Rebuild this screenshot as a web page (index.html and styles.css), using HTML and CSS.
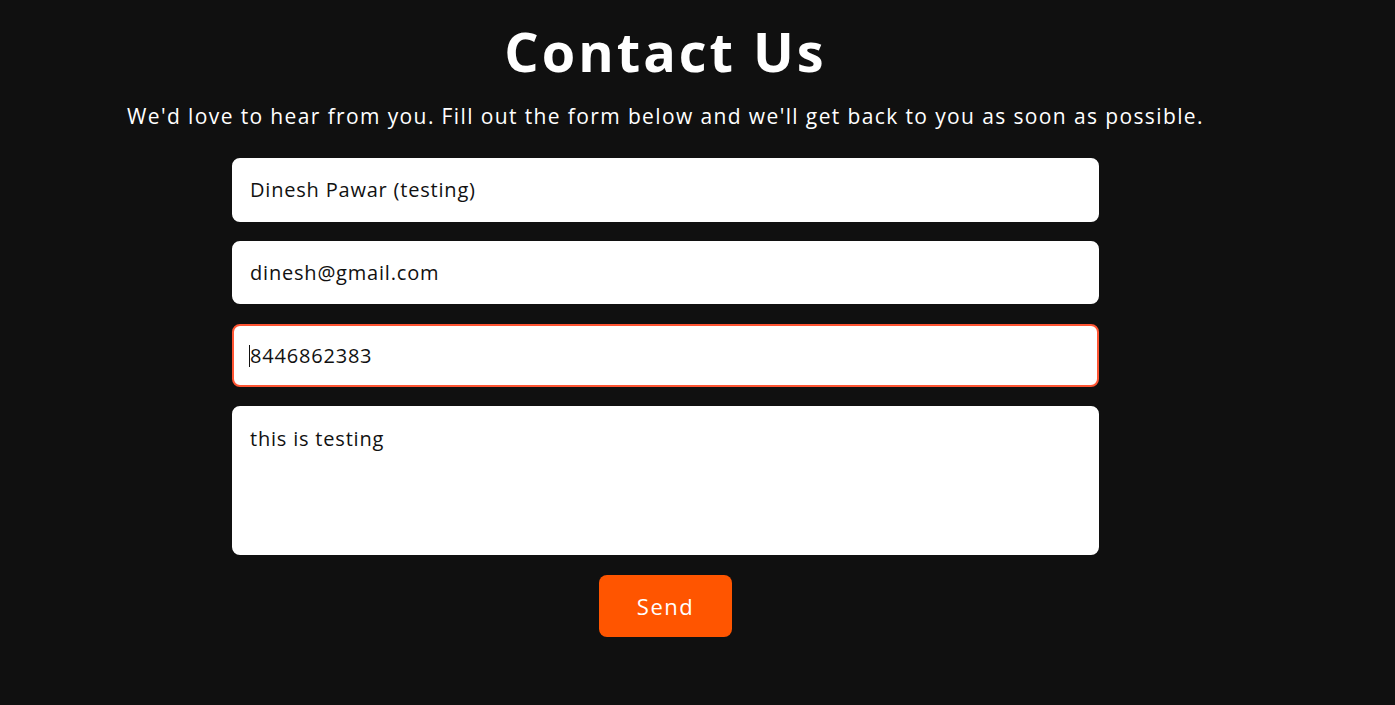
FILE: index.html
```html
<!DOCTYPE html>
<html lang="en">
<head>
<meta charset="utf-8">
<title>Contact Us</title>
<link rel="stylesheet" href="styles.css">
</head>
<body>
<main class="page">
  <h1 class="title">Contact Us</h1>
  <p class="lead">We'd love to hear from you. Fill out the form below and we'll get back to you as soon as possible.</p>
  <form class="form">
    <input class="field" type="text" value="Dinesh Pawar (testing)">
    <input class="field" type="email" value="dinesh@gmail.com">
    <div class="field-wrap">
      <input class="field field-focus" type="tel" value="8446862383">
      <span class="caret"></span>
    </div>
    <textarea class="field field-area">this is testing</textarea>
    <button class="send" type="button">Send</button>
  </form>
</main>
</body>
</html>
```
FILE: styles.css
```css
* { box-sizing: border-box; }
html, body { margin: 0; padding: 0; }
body {
  background: #101010;
  font-family: "Open Sans", "DejaVu Sans", sans-serif;
  color: #fff;
  height: 705px;
  overflow: hidden;
}
.page {
  width: 1331px;
  display: flex;
  flex-direction: column;
  align-items: center;
  padding-top: 18px;
}
.title {
  margin: 0;
  font-size: 54px;
  line-height: 66px;
  font-weight: 700;
  letter-spacing: 3px;
}
.lead {
  margin: 18px 0 0;
  font-size: 21px;
  line-height: 28px;
  font-weight: 400;
  letter-spacing: 1.38px;
}
.form {
  margin-top: 28px;
  width: 867px;
  display: flex;
  flex-direction: column;
  align-items: center;
  gap: 19.3px;
}
.field-wrap { position: relative; width: 100%; }
.field {
  display: block;
  width: 100%;
  height: 63.5px;
  border: 2px solid #fff;
  border-radius: 8px;
  background: #fff;
  padding: 0 16px;
  font-family: inherit;
  font-size: 20px;
  letter-spacing: 0.8px;
  color: #111;
  outline: none;
}
.field-focus { border-color: #ff5533; }
.caret {
  position: absolute;
  left: 17px;
  top: 21px;
  width: 1px;
  height: 22px;
  background: #111;
}
.field-area {
  height: 149px;
  padding: 18px 16px;
  resize: none;
  line-height: 26px;
}
.send {
  margin-top: 0;
  width: 133px;
  height: 62.5px;
  border: none;
  border-radius: 8px;
  background: #ff5500;
  color: #fff;
  font-family: inherit;
  font-size: 22px;
  letter-spacing: 1.5px;
  cursor: pointer;
}
```
